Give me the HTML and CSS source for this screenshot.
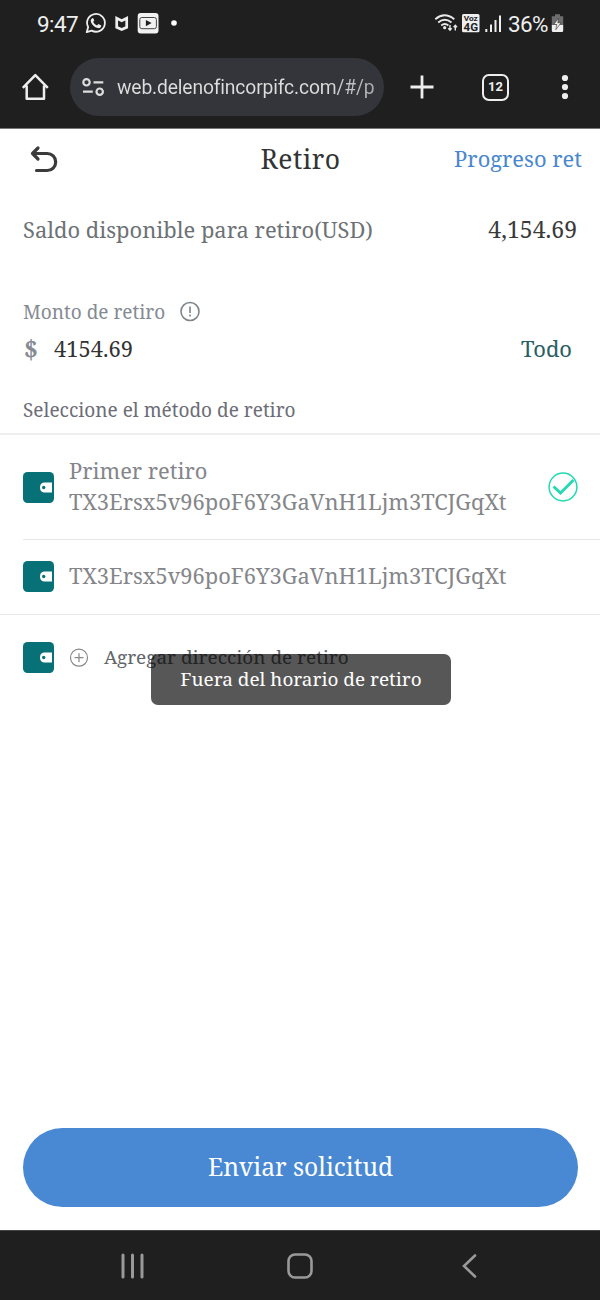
FILE: index.html
```html
<!DOCTYPE html>
<html lang="es">
<head>
<meta charset="utf-8">
<title>Retiro</title>
<link rel="stylesheet" href="styles.css">
</head>
<body>
<div class="phone">
  <div class="status">
    <span class="clock">9:47</span>
    <svg class="notif" width="94" height="24" viewBox="84 11 94 24">
      <path d="M86.700 32.200l1.500-5.100a8.900 8.900 0 1 1 3.500 3.500z" fill="none" stroke="#eee" stroke-width="1.800" stroke-linejoin="round"/>
      <path d="M92.300 18.300c-1.500.7-2 2.300-1.200 4.100 1.300 3 4 5.200 7 5.700 1.700.2 3.200-.8 3.200-2.600l-2.900-1.500-1.400 1.500c-1.800-.8-3-2-3.800-3.700l1.100-1.300-1.200-2.400z" fill="#eee"/>
      <path d="M116.700 18.300l5 2.500 5-2.500v9l-5 2.200-5-2.200z" fill="none" stroke="#eee" stroke-width="2.700"/>
      <rect x="137.700" y="13" width="20.800" height="20.500" rx="3" fill="#f2f2f2"/>
      <rect x="139.800" y="17.500" width="16.600" height="11.200" rx="2" fill="none" stroke="#444" stroke-width="1"/>
      <path d="M145.900 20l5.700 3.100-5.700 3.100z" fill="#222"/>
      <circle cx="174" cy="23" r="2.800" fill="#fff"/>
    </svg>
    <div class="status-right">
      <svg width="68" height="24" viewBox="434 11 68 24">
        <g fill="none" stroke="#e8e8e8" stroke-width="1.900">
          <path d="M435.300 19.200q9-7.700 19 0M438.200 22.500q6.500-5.300 13.300 0M441.200 25.500q3.700-2.800 7.200 0"/>
          <path d="M450 25v5M448.300 28.300l1.700 1.900 1.700-1.900M455.300 30.500v-5M453.600 27.200l1.700-1.900 1.700 1.900" stroke-width="1.400"/>
        </g>
        <circle cx="444.700" cy="27.700" r="1.600" fill="#e8e8e8"/>
        <rect x="462" y="14" width="17.500" height="18.300" rx="1.500" fill="#eee"/>
        <text x="463.700" y="21.300" textLength="14" lengthAdjust="spacingAndGlyphs" class="voz">Voz</text>
        <text x="463.500" y="31" textLength="14.500" lengthAdjust="spacingAndGlyphs" class="lte">4G</text>
        <path d="M486.300 29v3M491 24.500v7.500M495.500 20v12M500 15.500v16.500" stroke="#eee" stroke-width="2"/>
      </svg>
      <span class="pct">36%</span>
      <svg width="13" height="20" viewBox="551 13 13 20">
        <path d="M555 14.300h5v2h3.200v9h-11.400v-9h3.200z" fill="#6d6d6d"/>
        <path d="M551.800 25h11.400v5.700q0 1.300-1.300 1.300h-8.800q-1.300 0-1.300-1.300z" fill="#eee"/>
        <path d="M558.600 18l-4.800 6.500h3l-1 5.200 5.200-6.900h-3.200z" fill="#eee" stroke="#333" stroke-width=".6"/>
      </svg>
    </div>
  </div>
  <div class="toolbar">
    <svg width="30" height="30" viewBox="20 72 30 30"><path d="M26.700 85.500v13.200h17.300v-13.200M22.800 87.800l12.500-12.600 12.500 12.600" fill="none" stroke="#eee" stroke-width="2.500" stroke-linejoin="round"/></svg>
    <div class="omnibox">
      <svg width="24" height="20" viewBox="81 77 24 20"><g fill="none" stroke="#ddd" stroke-width="2.200"><circle cx="86.500" cy="82.300" r="3.200"/><circle cx="99.700" cy="91.700" r="3.200"/><path d="M93.500 82.300h9.800M83 91.700h9.800"/></g></svg>
      <span class="url">web.delenofincorpifc.com/#/p</span>
    </div>
    <svg class="plus" width="24" height="24"><path d="M12 .5v23M.5 12h23" stroke="#eee" stroke-width="2.800"/></svg>
    <div class="tabs">12</div>
    <svg class="kebab" width="8" height="26"><g fill="#eee"><circle cx="4" cy="4" r="3.100"/><circle cx="4" cy="13" r="3.100"/><circle cx="4" cy="22" r="3.100"/></g></svg>
  </div>
  <main class="page">
    <header class="header">
      <svg width="30" height="30" viewBox="29 144 30 30"><path d="M33 152.500h14.200a8.300 8.300 0 0 1 0 17H36.500M38 147l-5.500 5.500 5.500 5.500" fill="none" stroke="#3b3b3b" stroke-width="3.200" stroke-linecap="round" stroke-linejoin="round"/></svg>
      <h1 class="title">Retiro</h1>
      <a class="progress">Progreso ret</a>
    </header>
    <div class="balance"><span class="balance-label">Saldo disponible para retiro(USD)</span><span class="balance-value">4,154.69</span></div>
    <div class="amount-label"><span>Monto de retiro</span>
      <svg width="22" height="22"><circle cx="11" cy="10.500" r="9" fill="none" stroke="#7d858b" stroke-width="1.600"/><path d="M11 5.500V12M11 13.500v2" stroke="#7d858b" stroke-width="1.600"/></svg>
    </div>
    <div class="amount"><b class="dollar">$</b><span class="amount-value">4154.69</span><span class="all">Todo</span></div>
    <div class="method"><span>Seleccione el método de retiro</span></div>
    <div class="row first">
      <svg class="wallet" width="31" height="31" viewBox="0 0 31 31"><rect width="31" height="31" rx="4.500" fill="#087178"/><path d="M29 10.500v10h-8q-4-.7-4-5t4-5z" fill="#fff"/><circle cx="20.700" cy="15.500" r="1.700" fill="#087178"/></svg>
      <div class="wallet-text"><div class="name">Primer retiro</div><div class="addr">TX3Ersx5v96poF6Y3GaVnH1Ljm3TCJGqXt</div></div>
      <svg class="check" width="30" height="30"><circle cx="15" cy="15" r="13.900" fill="none" stroke="#22d9b4" stroke-width="1.500"/><path d="M5.500 14.500l7 6.500L25.500 8" fill="none" stroke="#22d9b4" stroke-width="2.800"/></svg>
    </div>
    <div class="row second">
      <svg class="wallet" width="31" height="31" viewBox="0 0 31 31"><rect width="31" height="31" rx="4.500" fill="#087178"/><path d="M29 10.500v10h-8q-4-.7-4-5t4-5z" fill="#fff"/><circle cx="20.700" cy="15.500" r="1.700" fill="#087178"/></svg>
      <div class="addr">TX3Ersx5v96poF6Y3GaVnH1Ljm3TCJGqXt</div>
    </div>
    <div class="row add">
      <svg class="wallet" width="31" height="31" viewBox="0 0 31 31"><rect width="31" height="31" rx="4.500" fill="#087178"/><path d="M29 10.500v10h-8q-4-.7-4-5t4-5z" fill="#fff"/><circle cx="20.700" cy="15.500" r="1.700" fill="#087178"/></svg>
      <svg class="add-icon" width="20" height="20"><circle cx="10" cy="9.700" r="8.500" fill="none" stroke="#888" stroke-width="1.200"/><path d="M10 5.200v9M5.500 9.700h9" stroke="#888" stroke-width="1.200"/></svg>
      <span class="add-label">Agregar dirección de retiro</span>
      <div class="toast"><span>Fuera del horario de retiro</span></div>
    </div>
    <button class="submit"><span>Enviar solicitud</span></button>
  </main>
  <nav class="nav">
    <svg width="26" height="26"><path d="M3 2v22M12.500 2v22M22 2v22" stroke="#999" stroke-width="3" stroke-linecap="round"/></svg>
    <svg width="28" height="28"><rect x="2.500" y="2.500" width="23" height="23" rx="6.500" fill="none" stroke="#999" stroke-width="2.600"/></svg>
    <svg width="18" height="26"><path d="M15 2.500L4 13l11 10.500" fill="none" stroke="#999" stroke-width="2.600" stroke-linecap="round"/></svg>
  </nav>
</div>
</body>
</html>
```
FILE: styles.css
```css
* { box-sizing: border-box; }
body { margin: 0; background: #fff; font-family: "Noto Serif", "DejaVu Serif Condensed", "DejaVu Serif", serif; }
svg { display: block; flex: none; }
span, .title, .addr, .name, .progress { white-space: nowrap; }
.phone { width: 600px; height: 1300px; display: flex; flex-direction: column; overflow: hidden; }
.status { height: 46px; background: #1f1f1f; display: flex; align-items: center; padding: 0 36px 0 37px; font-family: Roboto, sans-serif; color: #eee; }
.clock { width: 47px; font-size: 22.500px; letter-spacing: -.6px; padding-top: 2px; }
.status-right { margin-left: auto; display: flex; align-items: center; }
.pct { width: 43px; font-size: 22.500px; margin-left: 6px; letter-spacing: -.6px; padding-top: 2px; }
.voz { font: bold 8px Roboto, sans-serif; fill: #222; }
.lte { font: bold 11px Roboto, sans-serif; fill: #222; }
.toolbar { height: 83px; background: #1f1f1f; border-bottom: 1px solid #777; display: flex; align-items: center; padding: 0 31px 0 20px; font-family: Roboto, sans-serif; color: #eee; }
.omnibox { width: 314px; height: 58px; margin-left: 20px; border-radius: 29px; background: #34353a; display: flex; align-items: center; padding-left: 11px; }
.url { margin-left: 12px; font-size: 19.300px; letter-spacing: -.15px; color: transparent; background: linear-gradient(90deg, #dedede 80%, #aaa); -webkit-background-clip: text; }
.plus { margin-left: 26px; }
.tabs { margin-left: 48px; width: 27px; height: 27px; border: 2.500px solid #eee; border-radius: 7px; font: bold 13px/22px Roboto, sans-serif; text-align: center; }
.kebab { margin-left: auto; }
.page { height: 1101px; display: flex; flex-direction: column; }
.header { height: 62px; display: grid; grid-template-columns: 200px 200px 200px; align-items: center; }
.header svg { margin-left: 29px; }
.title { margin: -3px 0 0 1px; text-align: center; font-size: 26.500px; letter-spacing: .5px; font-weight: 400; color: #333; }
.progress { margin-top: -3px; text-align: right; padding-right: 18px; font-size: 21.900px; color: #4a88cd; }
.balance { height: 76px; display: flex; justify-content: space-between; align-items: center; padding: 0 23px; font-size: 21.900px; color: #6d7276; }
.balance-value { font-size: 23px; color: #3a3a3a; }
.amount-label { height: 40px; margin-top: 25px; display: flex; align-items: center; gap: 14px; padding-left: 23px; font-size: 19px; color: #858b93; }
.amount { height: 36px; display: flex; align-items: center; padding: 0 28px 4px 24px; font-size: 21.900px; color: #333; }
.dollar { width: 30px; font-size: 24.500px; color: #858b93; }
.all { margin-left: auto; color: #286064; }
.method { height: 67px; padding: 28px 23px 0; border-bottom: 2px solid #eee; font-size: 19px; line-height: 28px; color: #6c6d77; }
.row { display: flex; align-items: center; padding-left: 23px; font-size: 21.870px; color: #85868a; }
.wallet { margin-right: 15px; }
.first { height: 104px; line-height: 31px; }
.wallet-text { margin-top: -2px; }
.check { margin-left: auto; margin-right: 22px; }
.second { height: 76px; border-bottom: 1px solid #e6e6e6; background: linear-gradient(#e6e6eb, #e6e6eb) 23px 0 / 577px 1px no-repeat; }
.second .addr { margin-top: -2px; }
.add { height: 85px; position: relative; }
.add-label { margin: -2px 0 0 15px; font-size: 18.950px; color: #62666b; }
.toast { position: absolute; left: 151px; top: 39px; width: 300px; height: 51px; padding-bottom: 2px; border-radius: 7px; background: rgba(0,0,0,.66); display: flex; align-items: center; justify-content: center; color: #fff; font-size: 18.950px; }
.submit { margin: auto 22px 23px 23px; height: 79px; padding-bottom: 3px; border: 0; border-radius: 40px; background: #4989d3; color: #fff; font-family: inherit; font-size: 24.600px; }
.nav { height: 70px; background: #1f1f1f; border-top: 1px solid #444; display: grid; grid-template-columns: 166px 174px 18px; align-items: center; padding-left: 120px; }
```
